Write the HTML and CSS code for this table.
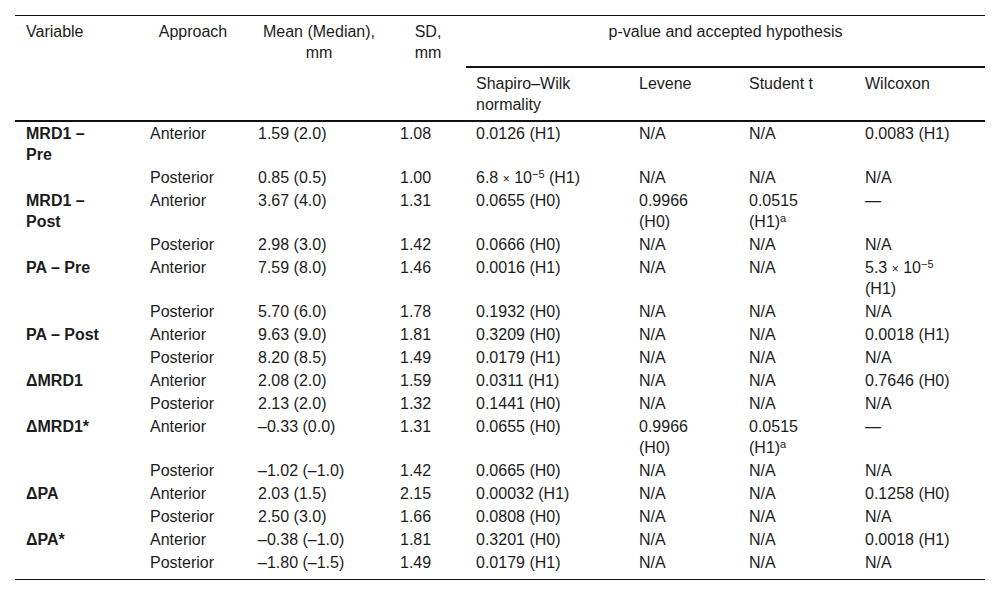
FILE: index.html
```html
<!DOCTYPE html>
<html lang="en">
<head>
<meta charset="utf-8">
<title>Table</title>
<link rel="stylesheet" href="styles.css">
</head>
<body>
<div class="wrap">
<table class="data">
  <colgroup>
    <col class="c1"><col class="c2"><col class="c3"><col class="c4">
    <col class="c5"><col class="c6"><col class="c7"><col class="c8">
  </colgroup>
  <thead>
    <tr class="h1">
      <th rowspan="2" class="left k1">Variable</th>
      <th rowspan="2" class="center k2">Approach</th>
      <th rowspan="2" class="center k3">Mean (Median), mm</th>
      <th rowspan="2" class="center k4">SD, mm</th>
      <th colspan="4" class="center group">p-value and accepted hypothesis</th>
    </tr>
    <tr class="h2">
      <th class="left k5">Shapiro–Wilk normality</th>
      <th class="left k6">Levene</th>
      <th class="left k7">Student t</th>
      <th class="left k8">Wilcoxon</th>
    </tr>
  </thead>
  <tbody>
    <tr><td class="k1 var">MRD1 – Pre</td><td class="k2">Anterior</td><td class="k3">1.59 (2.0)</td><td class="k4">1.08</td><td class="k5">0.0126 (H1)</td><td class="k6">N/A</td><td class="k7">N/A</td><td class="k8">0.0083 (H1)</td></tr>
    <tr><td class="k1 var"></td><td class="k2">Posterior</td><td class="k3">0.85 (0.5)</td><td class="k4">1.00</td><td class="k5">6.8 <span class="times">×</span> 10<sup class="sup">−5</sup> (H1)</td><td class="k6">N/A</td><td class="k7">N/A</td><td class="k8">N/A</td></tr>
    <tr><td class="k1 var">MRD1 – Post</td><td class="k2">Anterior</td><td class="k3">3.67 (4.0)</td><td class="k4">1.31</td><td class="k5">0.0655 (H0)</td><td class="k6">0.9966 (H0)</td><td class="k7">0.0515 (H1)<sup class="sup">a</sup></td><td class="k8">—</td></tr>
    <tr><td class="k1 var"></td><td class="k2">Posterior</td><td class="k3">2.98 (3.0)</td><td class="k4">1.42</td><td class="k5">0.0666 (H0)</td><td class="k6">N/A</td><td class="k7">N/A</td><td class="k8">N/A</td></tr>
    <tr><td class="k1 var">PA – Pre</td><td class="k2">Anterior</td><td class="k3">7.59 (8.0)</td><td class="k4">1.46</td><td class="k5">0.0016 (H1)</td><td class="k6">N/A</td><td class="k7">N/A</td><td class="k8">5.3 <span class="times">×</span> 10<sup class="sup">−5</sup> (H1)</td></tr>
    <tr><td class="k1 var"></td><td class="k2">Posterior</td><td class="k3">5.70 (6.0)</td><td class="k4">1.78</td><td class="k5">0.1932 (H0)</td><td class="k6">N/A</td><td class="k7">N/A</td><td class="k8">N/A</td></tr>
    <tr><td class="k1 var">PA – Post</td><td class="k2">Anterior</td><td class="k3">9.63 (9.0)</td><td class="k4">1.81</td><td class="k5">0.3209 (H0)</td><td class="k6">N/A</td><td class="k7">N/A</td><td class="k8">0.0018 (H1)</td></tr>
    <tr><td class="k1 var"></td><td class="k2">Posterior</td><td class="k3">8.20 (8.5)</td><td class="k4">1.49</td><td class="k5">0.0179 (H1)</td><td class="k6">N/A</td><td class="k7">N/A</td><td class="k8">N/A</td></tr>
    <tr><td class="k1 var">ΔMRD1</td><td class="k2">Anterior</td><td class="k3">2.08 (2.0)</td><td class="k4">1.59</td><td class="k5">0.0311 (H1)</td><td class="k6">N/A</td><td class="k7">N/A</td><td class="k8">0.7646 (H0)</td></tr>
    <tr><td class="k1 var"></td><td class="k2">Posterior</td><td class="k3">2.13 (2.0)</td><td class="k4">1.32</td><td class="k5">0.1441 (H0)</td><td class="k6">N/A</td><td class="k7">N/A</td><td class="k8">N/A</td></tr>
    <tr><td class="k1 var">ΔMRD1*</td><td class="k2">Anterior</td><td class="k3">–0.33 (0.0)</td><td class="k4">1.31</td><td class="k5">0.0655 (H0)</td><td class="k6">0.9966 (H0)</td><td class="k7">0.0515 (H1)<sup class="sup">a</sup></td><td class="k8">—</td></tr>
    <tr><td class="k1 var"></td><td class="k2">Posterior</td><td class="k3">–1.02 (–1.0)</td><td class="k4">1.42</td><td class="k5">0.0665 (H0)</td><td class="k6">N/A</td><td class="k7">N/A</td><td class="k8">N/A</td></tr>
    <tr><td class="k1 var">ΔPA</td><td class="k2">Anterior</td><td class="k3">2.03 (1.5)</td><td class="k4">2.15</td><td class="k5">0.00032 (H1)</td><td class="k6">N/A</td><td class="k7">N/A</td><td class="k8">0.1258 (H0)</td></tr>
    <tr><td class="k1 var"></td><td class="k2">Posterior</td><td class="k3">2.50 (3.0)</td><td class="k4">1.66</td><td class="k5">0.0808 (H0)</td><td class="k6">N/A</td><td class="k7">N/A</td><td class="k8">N/A</td></tr>
    <tr><td class="k1 var">ΔPA*</td><td class="k2">Anterior</td><td class="k3">–0.38 (–1.0)</td><td class="k4">1.81</td><td class="k5">0.3201 (H0)</td><td class="k6">N/A</td><td class="k7">N/A</td><td class="k8">0.0018 (H1)</td></tr>
    <tr class="last"><td class="k1 var"></td><td class="k2">Posterior</td><td class="k3">–1.80 (–1.5)</td><td class="k4">1.49</td><td class="k5">0.0179 (H1)</td><td class="k6">N/A</td><td class="k7">N/A</td><td class="k8">N/A</td></tr>
  </tbody>
</table>
</div>
</body>
</html>
```

FILE: styles.css
```css
html, body {
  margin: 0;
  padding: 0;
  background: #ffffff;
}

.wrap {
  padding: 15px;
}

.data {
  width: 970px;
  table-layout: fixed;
  border-collapse: separate;
  border-spacing: 0;
  font-family: "Liberation Sans", Arial, sans-serif;
  font-size: 16px;
  line-height: 21px;
  color: #1c1c1c;
}

.c1 { width: 125px; }
.c2 { width: 108px; }
.c3 { width: 142px; }
.c4 { width: 76px; }
.c5 { width: 163px; }
.c6 { width: 110px; }
.c7 { width: 116px; }
.c8 { width: 130px; }

.data th {
  font-weight: normal;
  vertical-align: top;
  padding-top: 5px;
  padding-bottom: 5px;
}

.data td {
  vertical-align: top;
  padding-top: 1px;
  padding-bottom: 1px;
}

.h1 th {
  border-top: 1px solid #111111;
}

.h1 th[rowspan] {
  border-bottom: 2px solid #111111;
}

.h1 .group {
  height: 40px;
  border-bottom: 2px solid #111111;
}

.h2 th {
  border-bottom: 2px solid #111111;
}

.last td {
  padding-bottom: 6px;
  border-bottom: 1px solid #111111;
}

.left { text-align: left; }
.center { text-align: center; }

.k1 { padding-left: 11px; padding-right: 34px; }
.k2 { padding-left: 8px; padding-right: 10px; }
.k3 { padding-left: 10px; padding-right: 10px; }
.k4 { padding-left: 10px; padding-right: 10px; }
.k5 { padding-left: 10px; padding-right: 10px; }
.k6 { padding-left: 10px; padding-right: 20px; }
.k7 { padding-left: 10px; padding-right: 30px; }
.k8 { padding-left: 10px; padding-right: 30px; }

td.k2 { padding-left: 10px; }

.group { padding-left: 10px; padding-right: 10px; }

.var {
  font-weight: bold;
}

.times {
  font-size: 12px;
  line-height: 0;
}

.sup {
  font-size: 11px;
  line-height: 0;
  vertical-align: 5px;
}
```
